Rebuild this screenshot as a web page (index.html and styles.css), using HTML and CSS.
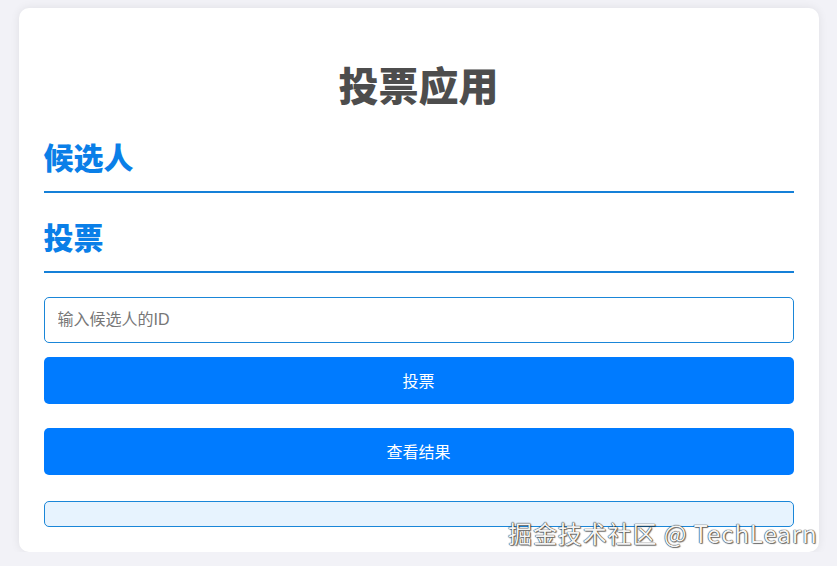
FILE: index.html
```html
<!DOCTYPE html>
<html lang="zh-CN">
<head>
    <meta charset="UTF-8">
    <title>投票应用</title>
    <link rel="stylesheet" href="styles.css">
</head>
<body>
<div class="container">
    <h1 class="title">投票应用</h1>
    <h2 class="section">候选人</h2>
    <div id="candidates"></div>
    <h2 class="section">投票</h2>
    <input type="text" id="candidate-id" class="field" placeholder="输入候选人的ID">
    <button class="btn btn-vote" id="vote">投票</button>
    <button class="btn btn-result" id="show-result">查看结果</button>
    <div id="result" class="result"></div>
</div>
<div class="mark">掘金技术社区 @ TechLearn</div>
</body>
</html>
```

FILE: styles.css
```css
*{
    box-sizing: border-box;
}
body{
    margin: 0;
    padding-top: 8px;
    background: #f2f2f7;
    font-family: "Liberation Sans", "Noto Sans CJK SC", sans-serif;
    color: #333;
}
.container{
    width: 800px;
    height: 544px;
    margin: 0 auto;
    padding: 25px;
    background: #fff;
    border-radius: 10px;
    box-shadow: 0 0 10px rgba(0,0,0,.08);
    display: flex;
    flex-direction: column;
}
.title{
    margin: 30px 0 29px;
    font-size: 40px;
    line-height: 48px;
    text-align: center;
    color: #4d4d4d;
    font-weight: 900;
}
.section{
    margin: 0 0 27px;
    padding-bottom: 14px;
    font-size: 30px;
    line-height: 37px;
    color: #0a7fe8;
    font-weight: 900;
    border-bottom: 2px solid #1580d8;
}
.section + .field{
    margin-top: -3px;
}
.field{
    height: 46px;
    padding: 0 13px;
    margin-bottom: 14px;
    border: 1px solid #1a86d8;
    border-radius: 5px;
    font-size: 16px;
    font-family: inherit;
    color: #333;
}
.field::placeholder{
    color: #777;
}
.btn{
    height: 47px;
    padding-bottom: 2px;
    border: 0;
    border-radius: 5px;
    background: #007bff;
    color: #fff;
    font-size: 16px;
    font-family: inherit;
}
.btn-vote{
    margin-bottom: 24px;
}
.btn-result{
    margin-bottom: 26px;
}
.result{
    height: 26px;
    background: #e7f3fe;
    border: 1px solid #1a86d8;
    border-radius: 5px;
}
.mark{
    position: absolute;
    left: 508px;
    top: 514px;
    font-size: 24px;
    line-height: 38px;
    letter-spacing: .9px;
    color: #f4f4f4;
    font-family: "Noto Sans CJK SC", sans-serif;
    text-shadow: 0 0 1px #222, 0 0 1px #222, 1px 1px 1px rgba(0,0,0,.5);
    white-space: nowrap;
}
```
